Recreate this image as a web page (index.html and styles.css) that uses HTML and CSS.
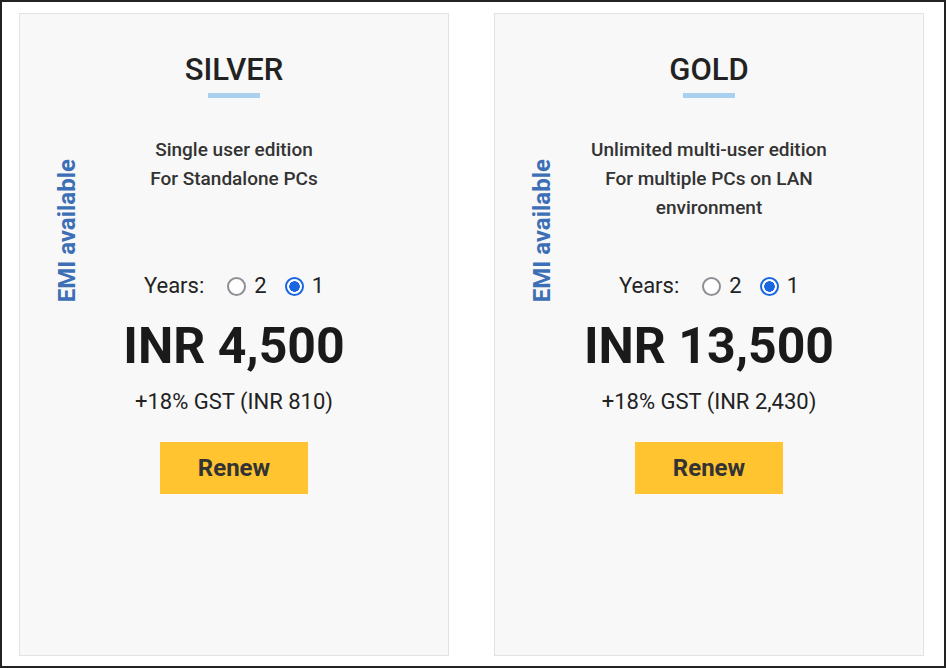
FILE: index.html
```html
<!DOCTYPE html>
<html>
<head>
<meta charset="utf-8">
<link rel="stylesheet" href="styles.css">
</head>
<body>
<div class="frame">
  <div class="plan">
    <div class="emi">EMI available</div>
    <h2 class="title">SILVER</h2>
    <div class="bar"></div>
    <div class="desc">Single user edition<br>For Standalone PCs</div>
    <div class="years">
      <span class="years-label">Years:</span>
      <span class="opt"><span class="radio"></span>2</span>
      <span class="opt"><span class="radio checked"></span>1</span>
    </div>
    <div class="price">INR 4,500</div>
    <div class="gst">+18% GST (INR 810)</div>
    <div class="btn">Renew</div>
  </div>
  <div class="plan">
    <div class="emi">EMI available</div>
    <h2 class="title">GOLD</h2>
    <div class="bar"></div>
    <div class="desc">Unlimited multi-user edition<br>For multiple PCs on LAN<br>environment</div>
    <div class="years">
      <span class="years-label">Years:</span>
      <span class="opt"><span class="radio"></span>2</span>
      <span class="opt"><span class="radio checked"></span>1</span>
    </div>
    <div class="price">INR 13,500</div>
    <div class="gst">+18% GST (INR 2,430)</div>
    <div class="btn">Renew</div>
  </div>
</div>
</body>
</html>
```

FILE: styles.css
```css
html, body {
  margin: 0;
  padding: 0;
  background: #ffffff;
}
body {
  font-family: Roboto, "Liberation Sans", sans-serif;
  color: #222;
}
.frame {
  box-sizing: border-box;
  width: 946px;
  height: 668px;
  border: 2px solid #222;
  padding: 11px 0 0 17px;
  display: flex;
  gap: 45px;
  align-items: flex-start;
}
.plan {
  position: relative;
  box-sizing: border-box;
  width: 430px;
  height: 643px;
  background: #f8f8f8;
  border: 1px solid #e2e2e2;
  display: flex;
  flex-direction: column;
  align-items: center;
  padding-top: 38px;
}
.emi {
  position: absolute;
  left: 33px;
  top: 145px;
  writing-mode: vertical-rl;
  transform: rotate(180deg);
  font-size: 24px;
  font-weight: 700;
  line-height: 28px;
  color: #3c6fb5;
}
.title {
  margin: 0;
  font-size: 31px;
  font-weight: 500;
  line-height: 35px;
  color: #222;
}
.bar {
  margin-top: 6px;
  width: 52px;
  height: 5px;
  background: #a9d1ef;
}
.desc {
  margin-top: 37px;
  height: 87px;
  font-size: 19px;
  font-weight: 500;
  line-height: 29px;
  text-align: center;
  color: #333;
}
.years {
  margin-top: 52px;
  display: flex;
  align-items: center;
  font-size: 22px;
  line-height: 24px;
  color: #222;
}
.years-label {
  margin-right: 23px;
}
.opt {
  display: flex;
  align-items: center;
  gap: 8px;
  margin-right: 18px;
}
.opt:last-child {
  margin-right: 0;
}
.radio {
  box-sizing: border-box;
  width: 19px;
  height: 19px;
  border-radius: 50%;
  border: 2.5px solid #8f8f95;
  background: #fff;
}
.radio.checked {
  border: 2.5px solid #1a66e0;
  background: radial-gradient(circle, #1a66e0 0 5px, #fff 5.5px);
}
.price {
  margin-top: 19px;
  font-size: 50px;
  font-weight: 700;
  line-height: 58px;
  color: #1a1a1a;
}
.gst {
  margin-top: 14px;
  font-size: 22px;
  line-height: 26px;
  color: #222;
}
.btn {
  margin-top: 27px;
  width: 148px;
  height: 52px;
  background: #ffc430;
  display: flex;
  align-items: center;
  justify-content: center;
  font-size: 24px;
  font-weight: 700;
  color: #333;
}
```
